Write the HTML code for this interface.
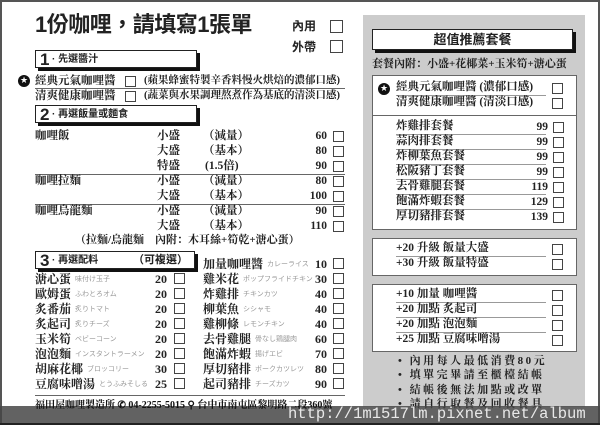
<!DOCTYPE html>
<html><head><meta charset="utf-8"><style>
*{margin:0;padding:0;box-sizing:border-box}
body{width:600px;height:425px;position:relative;background:#fff;overflow:hidden;font-family:"Liberation Serif","Noto Serif CJK SC",serif;color:#222}
.frame{position:absolute;left:0;top:0;width:600px;height:425px;border:2px solid #555;border-bottom:none}
.a{position:absolute;white-space:nowrap;line-height:1}
.s{font-size:11.5px;font-weight:bold}
.sans{font-family:"Liberation Sans","Noto Sans CJK TC",sans-serif;font-weight:bold}
.cb{position:absolute;width:11px;height:11px;border:1px solid #444;background:#fff}
.sec{position:absolute;border:1px solid #222;background:#fff;box-shadow:3px 3px 0 #111}
.hl{position:absolute;height:1px;background:#666}
.k{font-size:7px;color:#999;font-family:"Liberation Sans","Noto Sans CJK JP",sans-serif;font-weight:normal;margin-left:4px;vertical-align:2px}
.star{position:absolute;width:12px;height:12px;border-radius:50%;background:#111;color:#fff;font-size:9px;line-height:12px;text-align:center;font-family:"DejaVu Sans",sans-serif}
.r{text-align:right}
</style></head><body>
<div class="frame"></div>
<div class="a sans" style="left:35px;top:14px;font-size:22px;letter-spacing:-0.5px">1份咖哩，請填寫1張單</div>
<div class="a sans" style="left:292px;top:20px;font-size:12px">內用</div><div class="cb" style="left:330px;top:20px;width:13px;height:13px"></div>
<div class="a sans" style="left:292px;top:41px;font-size:12px">外帶</div><div class="cb" style="left:330px;top:40px;width:13px;height:13px"></div>

<div class="sec" style="left:35px;top:50px;width:162px;height:18px"></div>
<div class="a sans" style="left:40px;top:51px;font-size:17px">1</div><div class="a sans" style="left:52px;top:55px;font-size:10px">· 先選醬汁</div>
<div class="star" style="left:18px;top:75px">★</div>
<div class="a s" style="left:35px;top:76px">經典元氣咖哩醬</div><div class="cb" style="left:125px;top:76px"></div>
<div class="a s" style="left:144px;top:76px;font-size:10.5px">(蘋果蜂蜜特製辛香料慢火烘焙的濃郁口感)</div>
<div class="hl" style="left:35px;top:88px;width:310px"></div>
<div class="a s" style="left:35px;top:91px">清爽健康咖哩醬</div><div class="cb" style="left:125px;top:91px"></div>
<div class="a s" style="left:144px;top:91px;font-size:10.5px">(蔬菜與水果調理熬煮作為基底的清淡口感)</div>

<div class="sec" style="left:35px;top:105px;width:162px;height:18px"></div>
<div class="a sans" style="left:40px;top:106px;font-size:17px">2</div><div class="a sans" style="left:52px;top:110px;font-size:10px">· 再選飯量或麵食</div>

<div style="position:absolute;left:0;top:0" class="s">
<div class="a" style="left:35px;top:131px">咖哩飯</div>
<div class="a" style="left:157px;top:131px">小盛</div><div class="a" style="left:203px;top:131px">（減量）</div><div class="a r" style="left:290px;top:131px;width:37px">60</div><div class="cb" style="left:333px;top:131px"></div>
<div class="a" style="left:157px;top:146px">大盛</div><div class="a" style="left:203px;top:146px">（基本）</div><div class="a r" style="left:290px;top:146px;width:37px">80</div><div class="cb" style="left:333px;top:146px"></div>
<div class="a" style="left:157px;top:161px">特盛</div><div class="a" style="left:205px;top:161px">(1.5倍)</div><div class="a r" style="left:290px;top:161px;width:37px">90</div><div class="cb" style="left:333px;top:161px"></div>
<div class="hl" style="left:35px;top:174px;width:310px"></div>
<div class="a" style="left:35px;top:176px">咖哩拉麵</div>
<div class="a" style="left:157px;top:176px">小盛</div><div class="a" style="left:203px;top:176px">（減量）</div><div class="a r" style="left:290px;top:176px;width:37px">80</div><div class="cb" style="left:333px;top:176px"></div>
<div class="a" style="left:157px;top:191px">大盛</div><div class="a" style="left:203px;top:191px">（基本）</div><div class="a r" style="left:290px;top:191px;width:37px">100</div><div class="cb" style="left:333px;top:191px"></div>
<div class="hl" style="left:35px;top:204px;width:310px"></div>
<div class="a" style="left:35px;top:206px">咖哩烏龍麵</div>
<div class="a" style="left:157px;top:206px">小盛</div><div class="a" style="left:203px;top:206px">（減量）</div><div class="a r" style="left:290px;top:206px;width:37px">90</div><div class="cb" style="left:333px;top:206px"></div>
<div class="a" style="left:157px;top:221px">大盛</div><div class="a" style="left:203px;top:221px">（基本）</div><div class="a r" style="left:290px;top:221px;width:37px">110</div><div class="cb" style="left:333px;top:221px"></div>
<div class="a" style="left:75px;top:235px;font-size:11px">（拉麵/烏龍麵　內附：木耳絲+筍乾+溏心蛋）</div>
</div>

<div class="sec" style="left:35px;top:251px;width:160px;height:18px"></div>
<div class="a sans" style="left:40px;top:252px;font-size:17px">3</div><div class="a sans" style="left:52px;top:256px;font-size:10px">· 再選配料</div><div class="a sans" style="left:133px;top:255px;font-size:11px">（可複選）</div>

<div class="s" style="position:absolute;left:0;top:0;font-size:12px">
<div class="a" style="left:35px;top:273px">溏心蛋<span class="k">味付け玉子</span></div><div class="a r" style="left:140px;top:273px;width:27px">20</div><div class="cb" style="left:174px;top:273px"></div>
<div class="a" style="left:35px;top:288px">歐姆蛋<span class="k">ふわとろオム</span></div><div class="a r" style="left:140px;top:288px;width:27px">20</div><div class="cb" style="left:174px;top:288px"></div>
<div class="a" style="left:35px;top:303px">炙番茄<span class="k">炙りトマト</span></div><div class="a r" style="left:140px;top:303px;width:27px">20</div><div class="cb" style="left:174px;top:303px"></div>
<div class="a" style="left:35px;top:318px">炙起司<span class="k">炙りチーズ</span></div><div class="a r" style="left:140px;top:318px;width:27px">20</div><div class="cb" style="left:174px;top:318px"></div>
<div class="a" style="left:35px;top:333px">玉米筍<span class="k">ベビーコーン</span></div><div class="a r" style="left:140px;top:333px;width:27px">20</div><div class="cb" style="left:174px;top:333px"></div>
<div class="a" style="left:35px;top:348px">泡泡麵<span class="k">インスタントラーメン</span></div><div class="a r" style="left:140px;top:348px;width:27px">20</div><div class="cb" style="left:174px;top:348px"></div>
<div class="a" style="left:35px;top:363px">胡麻花椰<span class="k">ブロッコリー</span></div><div class="a r" style="left:140px;top:363px;width:27px">30</div><div class="cb" style="left:174px;top:363px"></div>
<div class="a" style="left:35px;top:378px">豆腐味噌湯<span class="k">とうふみそしる</span></div><div class="a r" style="left:140px;top:378px;width:27px">25</div><div class="cb" style="left:174px;top:378px"></div>

<div class="a" style="left:203px;top:258px">加量咖哩醬<span class="k">カレーライス</span></div><div class="a r" style="left:300px;top:258px;width:27px">10</div><div class="cb" style="left:333px;top:258px"></div>
<div class="a" style="left:203px;top:273px">雞米花<span class="k">ポップフライドチキン</span></div><div class="a r" style="left:300px;top:273px;width:27px">30</div><div class="cb" style="left:333px;top:273px"></div>
<div class="a" style="left:203px;top:288px">炸雞排<span class="k">チキンカツ</span></div><div class="a r" style="left:300px;top:288px;width:27px">40</div><div class="cb" style="left:333px;top:288px"></div>
<div class="a" style="left:203px;top:303px">柳葉魚<span class="k">シシャモ</span></div><div class="a r" style="left:300px;top:303px;width:27px">40</div><div class="cb" style="left:333px;top:303px"></div>
<div class="a" style="left:203px;top:318px">雞柳條<span class="k">レモンチキン</span></div><div class="a r" style="left:300px;top:318px;width:27px">40</div><div class="cb" style="left:333px;top:318px"></div>
<div class="a" style="left:203px;top:333px">去骨雞腿<span class="k">骨なし鶏腿肉</span></div><div class="a r" style="left:300px;top:333px;width:27px">60</div><div class="cb" style="left:333px;top:333px"></div>
<div class="a" style="left:203px;top:348px">飽滿炸蝦<span class="k">揚げエビ</span></div><div class="a r" style="left:300px;top:348px;width:27px">70</div><div class="cb" style="left:333px;top:348px"></div>
<div class="a" style="left:203px;top:363px">厚切豬排<span class="k">ポークカツレツ</span></div><div class="a r" style="left:300px;top:363px;width:27px">80</div><div class="cb" style="left:333px;top:363px"></div>
<div class="a" style="left:203px;top:378px">起司豬排<span class="k">チーズカツ</span></div><div class="a r" style="left:300px;top:378px;width:27px">90</div><div class="cb" style="left:333px;top:378px"></div>
</div>
<div class="hl" style="left:35px;top:395px;width:310px"></div>

<!-- right panel -->
<div style="position:absolute;left:363px;top:15px;width:222px;height:392px;background:#ccc"></div>
<div class="sec" style="left:372px;top:29px;width:201px;height:21px"></div>
<div class="a sans" style="left:372px;top:33px;width:201px;text-align:center;font-size:13px">超值推薦套餐</div>
<div class="a s" style="left:372px;top:59px;font-size:11px">套餐內附：小盛+花椰菜+玉米筍+溏心蛋</div>
<div style="position:absolute;left:372px;top:75px;width:205px;height:155px;background:#fff;border:1px solid #666"></div>
<div class="hl" style="left:372px;top:115px;width:205px"></div>
<div class="star" style="left:378px;top:83px">★</div>
<div class="a s" style="left:396px;top:82px">經典元氣咖哩醬 (濃郁口感)</div><div class="cb" style="left:552px;top:83px"></div>
<div class="hl" style="left:396px;top:95px;width:150px;background:#999"></div>
<div class="a s" style="left:396px;top:97px">清爽健康咖哩醬 (清淡口感)</div><div class="cb" style="left:552px;top:98px"></div>
<div class="s" style="position:absolute;left:0;top:0">
<div class="a" style="left:396px;top:121px">炸雞排套餐</div><div class="a r" style="left:520px;top:122px;width:28px">99</div><div class="cb" style="left:553px;top:122px"></div>
<div class="hl" style="left:396px;top:134px;width:150px;background:#999"></div>
<div class="a" style="left:396px;top:136px">蒜肉排套餐</div><div class="a r" style="left:520px;top:137px;width:28px">99</div><div class="cb" style="left:553px;top:137px"></div>
<div class="hl" style="left:396px;top:149px;width:150px;background:#999"></div>
<div class="a" style="left:396px;top:151px">炸柳葉魚套餐</div><div class="a r" style="left:520px;top:152px;width:28px">99</div><div class="cb" style="left:553px;top:152px"></div>
<div class="hl" style="left:396px;top:164px;width:150px;background:#999"></div>
<div class="a" style="left:396px;top:166px">松阪豬丁套餐</div><div class="a r" style="left:520px;top:167px;width:28px">99</div><div class="cb" style="left:553px;top:167px"></div>
<div class="hl" style="left:396px;top:179px;width:150px;background:#999"></div>
<div class="a" style="left:396px;top:181px">去骨雞腿套餐</div><div class="a r" style="left:520px;top:182px;width:28px">119</div><div class="cb" style="left:553px;top:182px"></div>
<div class="hl" style="left:396px;top:194px;width:150px;background:#999"></div>
<div class="a" style="left:396px;top:196px">飽滿炸蝦套餐</div><div class="a r" style="left:520px;top:197px;width:28px">129</div><div class="cb" style="left:553px;top:197px"></div>
<div class="hl" style="left:396px;top:209px;width:150px;background:#999"></div>
<div class="a" style="left:396px;top:211px">厚切豬排套餐</div><div class="a r" style="left:520px;top:212px;width:28px">139</div><div class="cb" style="left:553px;top:212px"></div>
</div>

<div style="position:absolute;left:372px;top:238px;width:205px;height:38px;background:#fff;border:1px solid #666"></div>
<div class="a s" style="left:396px;top:243px">+20 升級 飯量大盛</div><div class="cb" style="left:552px;top:244px"></div>
<div class="hl" style="left:396px;top:256px;width:150px;background:#999"></div>
<div class="a s" style="left:396px;top:258px">+30 升級 飯量特盛</div><div class="cb" style="left:552px;top:259px"></div>

<div style="position:absolute;left:372px;top:284px;width:205px;height:68px;background:#fff;border:1px solid #666"></div>
<div class="a s" style="left:396px;top:289px">+10 加量 咖哩醬</div><div class="cb" style="left:552px;top:290px"></div>
<div class="hl" style="left:396px;top:302px;width:150px;background:#999"></div>
<div class="a s" style="left:396px;top:304px">+20 加點 炙起司</div><div class="cb" style="left:552px;top:305px"></div>
<div class="hl" style="left:396px;top:317px;width:150px;background:#999"></div>
<div class="a s" style="left:396px;top:319px">+20 加點 泡泡麵</div><div class="cb" style="left:552px;top:320px"></div>
<div class="hl" style="left:396px;top:332px;width:150px;background:#999"></div>
<div class="a s" style="left:396px;top:334px">+25 加點 豆腐味噌湯</div><div class="cb" style="left:552px;top:335px"></div>

<div class="s" style="position:absolute;left:0;top:0;font-size:11px;letter-spacing:2.5px">
<div class="a" style="left:398px;top:356px">• 內用每人最低消費80元</div>
<div class="a" style="left:398px;top:370px">• 填單完畢請至櫃檯結帳</div>
<div class="a" style="left:398px;top:385px">• 結帳後無法加點或改單</div>
<div class="a" style="left:398px;top:399px">• 請自行取餐及回收餐具</div>
</div>

<div style="position:absolute;left:0;top:406px;width:600px;height:19px;background:rgba(70,70,70,0.85);border-bottom:2px solid #222"></div>
<div class="a s" style="left:35px;top:401px;font-size:10px;color:#111">福田屋咖哩製造所 ✆ 04-2255-5015 ⚲ 台中市南屯區黎明路二段360號</div>
<div class="a" style="left:288px;top:407px;font-family:'Liberation Mono',monospace;font-size:15.5px;color:#e8e8e8">http://1m1517lm.pixnet.net/album</div>
</body></html>
